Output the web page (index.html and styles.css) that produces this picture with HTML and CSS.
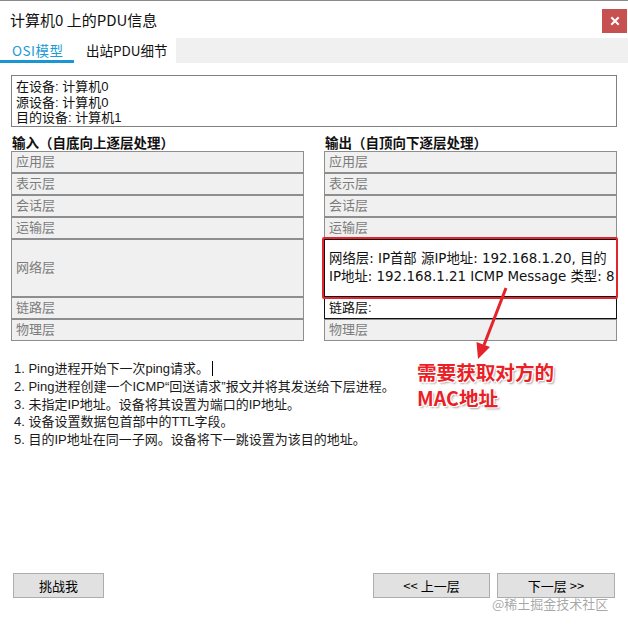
FILE: index.html
```html
<!DOCTYPE html>
<html lang="zh">
<head>
<meta charset="utf-8">
<link rel="stylesheet" href="styles.css">
</head>
<body>
<div class="window">
  <div class="titlebar">
    <span class="title">计算机0 上的PDU信息</span>
    <span class="close"><svg width="10" height="10" viewBox="0 0 10 10"><path d="M2 2 L8 8 M8 2 L2 8" stroke="#fff" stroke-width="2" stroke-linecap="square"/></svg></span>
  </div>
  <div class="tabs">
    <div class="tab active">OSI模型</div>
    <div class="tab second">出站PDU细节</div>
    <div class="tab-fill"></div>
  </div>
  <div class="info">在设备: 计算机0<br>源设备: 计算机0<br>目的设备: 计算机1</div>
  <div class="columns">
    <div class="col">
      <div class="col-head">输入（自底向上逐层处理）</div>
      <div class="layer">应用层</div>
      <div class="layer">表示层</div>
      <div class="layer">会话层</div>
      <div class="layer">运输层</div>
      <div class="layer tall">网络层</div>
      <div class="layer">链路层</div>
      <div class="layer">物理层</div>
    </div>
    <div class="col">
      <div class="col-head">输出（自顶向下逐层处理）</div>
      <div class="layer">应用层</div>
      <div class="layer">表示层</div>
      <div class="layer">会话层</div>
      <div class="layer">运输层</div>
      <div class="layer tall active-layer net">网络层: IP首部 源IP地址: 192.168.1.20, 目的<br>IP地址: 192.168.1.21 ICMP Message 类型: 8</div>
      <div class="layer active-layer">链路层:</div>
      <div class="layer">物理层</div>
    </div>
  </div>
  <div class="steps">
    <div>1. Ping进程开始下一次ping请求。<span class="cursor"></span></div>
    <div>2. Ping进程创建一个ICMP“回送请求”报文并将其发送给下层进程。</div>
    <div>3. 未指定IP地址。设备将其设置为端口的IP地址。</div>
    <div>4. 设备设置数据包首部中的TTL字段。</div>
    <div>5. 目的IP地址在同一子网。设备将下一跳设置为该目的地址。</div>
  </div>
  <div class="buttons">
    <button class="btn challenge">挑战我</button>
    <span class="spacer"></span>
    <button class="btn prev">&lt;&lt; 上一层</button>
    <button class="btn next">下一层 &gt;&gt;</button>
  </div>

  <div class="highlight"></div>
  <svg class="arrow" width="628" height="628" viewBox="0 0 628 628">
    <line x1="506" y1="288" x2="484" y2="345" stroke="#e4232b" stroke-width="3"/>
    <polygon points="478,359 490,347 476.5,342" fill="#e4232b"/>
  </svg>
  <div class="note">需要获取对方的<br>MAC地址</div>
  <div class="watermark">@稀土掘金技术社区</div>
</div>
</body>
</html>
```
FILE: styles.css
```css
* { box-sizing: border-box; }
html, body { margin: 0; padding: 0; background: #fff; }
.window {
  position: relative;
  width: 628px;
  height: 628px;
  border-top: 1px solid #8a8a8a;
  display: flex;
  flex-direction: column;
  padding-bottom: 30px;
  font-family: "Liberation Sans", "Noto Sans CJK SC", sans-serif;
  font-size: 13px;
  color: #111;
  overflow: hidden;
}
.titlebar {
  height: 37px;
  display: flex;
  align-items: center;
  padding-left: 10px;
}
.title {
  flex: 1;
  font-family: "Noto Sans CJK SC", sans-serif;
  font-size: 15px;
  line-height: 20px;
  color: #111;
}
.close {
  align-self: flex-start;
  margin-top: 8px;
  margin-right: 1px;
  width: 25px;
  height: 24px;
  background: #c75050;
  display: flex;
  align-items: center;
  justify-content: center;
}
.tabs {
  height: 25px;
  display: flex;
}
.tab {
  height: 25px;
  padding-top: 3px;
  padding-left: 12px;
  font-family: "Noto Sans CJK SC", sans-serif;
  font-size: 13.5px;
  line-height: 19px;
  background: #fff;
}
.tab.active {
  width: 74px;
  color: #1a9ad6;
  border-bottom: 3px solid #1a97d3;
  letter-spacing: 0.5px;
}
.tab.second { width: 102px; color: #111; }
.tab-fill { flex: 1; background: #f0f0f0; }
.info {
  margin: 12px 0 0 11px;
  width: 606px;
  height: 52px;
  border: 1px solid #808080;
  padding: 3px 4px;
  line-height: 15.5px;
}
.columns {
  margin: 6px 0 0 11px;
  display: grid;
  grid-template-columns: 293px 293px;
  column-gap: 20px;
}
.col { display: flex; flex-direction: column; }
.col-head {
  height: 18px;
  line-height: 18px;
  font-weight: bold;
  font-size: 13.5px;
  font-family: "Noto Sans CJK SC", sans-serif;
  padding-left: 1px;
}
.layer {
  height: 22px;
  border: 1px solid #8e8e8e;
  background: #f0f0f0;
  color: #7c7c7c;
  padding-left: 4px;
  display: flex;
  align-items: center;
  line-height: 16px;
}
.layer.tall { height: 58px; }
.layer.active-layer {
  background: #fff;
  border-color: #111;
  color: #111;
}
.layer.net {
  font-family: "DejaVu Sans", "Noto Sans CJK SC", sans-serif;
  font-size: 13.4px;
  line-height: 18px;
  white-space: nowrap;
}
.steps {
  margin-top: 19px;
  padding-left: 14px;
  line-height: 17.75px;
  color: #1a1a1a;
}
.cursor {
  display: inline-block;
  width: 1px;
  height: 15px;
  background: #000;
  margin-left: 3px;
  vertical-align: -3px;
}
.buttons {
  margin-top: auto;
  padding: 0 13px;
  display: flex;
  gap: 7px;
  height: 25px;
}
.spacer { flex: 1; }
.btn {
  height: 25px;
  background: #e1e1e1;
  border: 1px solid #adadad;
  font-family: "Noto Sans CJK SC", sans-serif;
  font-size: 13px;
  font-weight: 400;
  color: #000;
  padding: 0;
  line-height: 20px;
}
.challenge { width: 91px; }
.prev { width: 117px; }
.next { width: 118px; }
.highlight {
  position: absolute;
  left: 322px;
  top: 236px;
  width: 296px;
  height: 62px;
  border: 2px solid #e3262e;
  border-radius: 2px;
}
.arrow { position: absolute; left: 0; top: -1px; pointer-events: none; }
.note {
  position: absolute;
  left: 417px;
  top: 358px;
  font-family: "Noto Sans CJK SC", sans-serif;
  font-weight: bold;
  font-size: 19.6px;
  line-height: 26px;
  color: #ea1f28;
  text-shadow: -1px -1px 0 #fff, 1px -1px 0 #fff, -1px 1px 0 #fff, 1px 1px 0 #fff, 2px 2px 2px rgba(0,0,0,0.35);
}
.watermark {
  position: absolute;
  left: 492px;
  top: 595px;
  font-family: "Noto Sans CJK SC", sans-serif;
  font-size: 13px;
  line-height: 16px;
  color: rgba(140,140,140,0.75);
}
```
